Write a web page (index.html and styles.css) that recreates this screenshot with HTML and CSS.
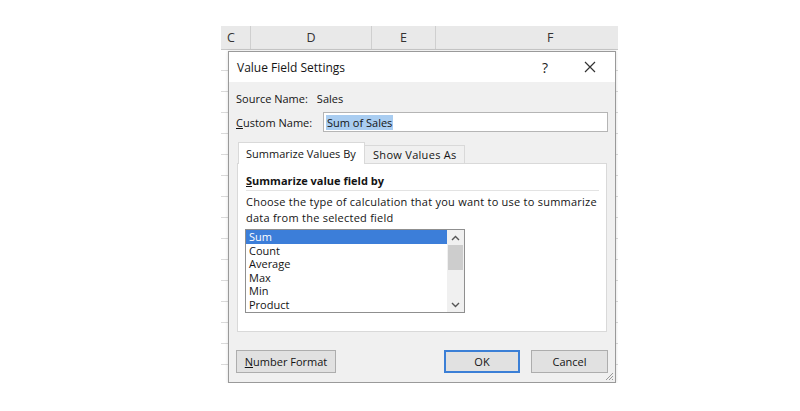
FILE: index.html
```html
<!DOCTYPE html>
<html>
<head>
<meta charset="utf-8">
<title>Value Field Settings</title>
<link rel="stylesheet" href="styles.css">
</head>
<body>
<div class="sheet">
  <div class="colhead">
    <div class="col col-c">C</div>
    <div class="col col-d">D</div>
    <div class="col col-e">E</div>
    <div class="col col-f">F</div>
  </div>
  <div class="cells"></div>

  <div class="dialog">
    <div class="titlebar">
      <span class="title">Value Field Settings</span>
      <span class="help">?</span>
      <span class="close">
        <svg width="12" height="12" viewBox="0 0 12 12"><path d="M1 1 L11 11 M11 1 L1 11" stroke="#333" stroke-width="1.2" fill="none"/></svg>
      </span>
    </div>
    <div class="body">
      <div class="row src"><span class="lbl">Source Name:</span><span>Sales</span></div>
      <div class="row custom">
        <span class="lbl"><u>C</u>ustom Name:</span>
        <div class="input"><span class="sel">Sum of Sales</span></div>
      </div>
      <div class="tabs">
        <div class="tab active">Summarize Values By</div>
        <div class="tab">Show Values As</div>
      </div>
      <div class="panel">
        <div class="heading"><u>S</u>ummarize value field by</div>
        <p class="desc">Choose the type of calculation that you want to use to summarize<br>data from the selected field</p>
        <div class="listbox">
          <ul class="items">
            <li class="selected">Sum</li>
            <li>Count</li>
            <li>Average</li>
            <li>Max</li>
            <li>Min</li>
            <li>Product</li>
          </ul>
          <div class="scroll">
            <svg class="arrow" width="9" height="6" viewBox="0 0 9 6"><path d="M1 5 L4.5 1.5 L8 5" stroke="#555" stroke-width="1.4" fill="none"/></svg>
            <div class="thumb"></div>
            <div class="track"></div>
            <svg class="arrow" width="9" height="6" viewBox="0 0 9 6"><path d="M1 1 L4.5 4.5 L8 1" stroke="#555" stroke-width="1.4" fill="none"/></svg>
          </div>
        </div>
      </div>
      <div class="buttons">
        <button class="btn numfmt"><u>N</u>umber Format</button>
        <span class="spacer"></span>
        <button class="btn ok">OK</button>
        <button class="btn cancel">Cancel</button>
      </div>
    </div>
    <svg class="grip" width="10" height="10" viewBox="0 0 10 10"><path d="M9 2 L2 9 M9 5 L5 9 M9 8 L8 9" stroke="#999" stroke-width="1" fill="none"/></svg>
  </div>
</div>
</body>
</html>
```

FILE: styles.css
```css
* { box-sizing: border-box; }
html, body { margin: 0; padding: 0; background: #ffffff; }
body { font-family: "Open Sans", "Noto Sans", sans-serif; color: #141414; }

.sheet {
  position: relative;
  margin: 26px 0 0 221px;
  width: 397px;
  height: 357px;
  background: #ffffff;
  overflow: hidden;
}
.colhead {
  display: flex;
  height: 24px;
  background: #e9e9e9;
  border-bottom: 1px solid #c8c8c8;
  font-size: 12.5px;
  color: #333;
  line-height: 23px;
}
.col { border-right: 1px solid #cfcfcf; flex: none; }
.col-c { width: 30px; padding-left: 6px; }
.col-d { width: 121px; text-align: center; }
.col-e { width: 64px; text-align: center; }
.col-f { width: 190px; padding-left: 111px; border-right: none; }
.cells {
  height: 333px;
  background: repeating-linear-gradient(to bottom, #ffffff 0, #ffffff 20px, #dadada 20px, #dadada 21px);
}

.dialog {
  position: absolute;
  left: 7px;
  top: 25px;
  width: 388px;
  height: 332px;
  border: 1px solid #9a9a9a;
  background: #f0f0f0;
  box-shadow: 0 0 3px rgba(0,0,0,0.15);
  font-size: 11px;
}
.titlebar {
  display: flex;
  align-items: center;
  height: 30px;
  background: #ffffff;
  padding-left: 8px;
}
.title { font-size: 12px; flex: 1; }
.help { font-size: 14px; color: #222; width: 20px; text-align: center; margin-right: 28px; }
.close { width: 14px; display: flex; justify-content: center; margin-right: 18px; }

.body { padding: 0 7px; }
.row { display: flex; align-items: center; }
.src { margin-top: 8px; height: 16px; }
.src .lbl { margin-right: 9px; }
.custom { margin-top: 6px; height: 20px; }
.custom .lbl { width: 87px; }
.input {
  width: 285px;
  height: 20px;
  background: #fff;
  border: 1px solid #b5b5b5;
  padding-left: 2px;
  display: flex;
  align-items: center;
}
.sel { background: #a9cdf1; padding: 0 1px; line-height: 15px; }

.tabs {
  display: flex;
  align-items: flex-end;
  margin-top: 10px;
  margin-left: 2px;
  position: relative;
  z-index: 1;
}
.tab {
  height: 18px;
  line-height: 17px;
  border: 1px solid #d9d9d9;
  border-bottom: none;
  background: #f0f0f0;
  padding: 0 0 0 8px;
  white-space: nowrap;
}
.tab.active {
  height: 22px;
  line-height: 22px;
  background: #fff;
  width: 127px;
  margin-bottom: -1px;
  padding: 0 0 0 7px;
}
.tab + .tab { border-left: none; width: 100px; letter-spacing: 0.3px; }

.panel {
  margin: 0 1px;
  height: 169px;
  background: #fff;
  border: 1px solid #d9d9d9;
  padding: 0 7px 0 8px;
}
.heading {
  margin-top: 9px;
  line-height: 16px;
  font-weight: bold;
  padding-bottom: 1px;
  border-bottom: 1px solid #e3e3e3;
}
.desc { margin: 3px 0 0; line-height: 16px; letter-spacing: 0.24px; }
.listbox {
  margin: 3px 0 0 -1px;
  width: 220px;
  height: 84px;
  border: 1px solid #8f8f8f;
  display: flex;
  background: #fff;
}
.items { list-style: none; margin: 0; padding: 0; flex: 1; }
.items li { line-height: 13.6px; height: 13.6px; padding-left: 3px; }
.items li.selected { background: #3c7ed9; color: #fff; }
.scroll {
  width: 17px;
  background: #f0f0f0;
  display: flex;
  flex-direction: column;
  align-items: center;
}
.arrow { margin: 5px 0 4px; flex: none; }
.thumb { width: 15px; height: 25px; background: #cdcdcd; flex: none; }
.track { flex: 1; }

.buttons { display: flex; margin-top: 18px; }
.spacer { flex: 1; }
.btn {
  font-family: inherit;
  font-size: 11px;
  color: #141414;
  height: 23px;
  background: #e1e1e1;
  border: 1px solid #adadad;
  padding: 0;
}
.numfmt { width: 100px; }
.ok { width: 76px; border: 2px solid #3b7fd6; margin-right: 11px; }
.cancel { width: 77px; }
.grip { position: absolute; right: 1px; bottom: 1px; }
```
